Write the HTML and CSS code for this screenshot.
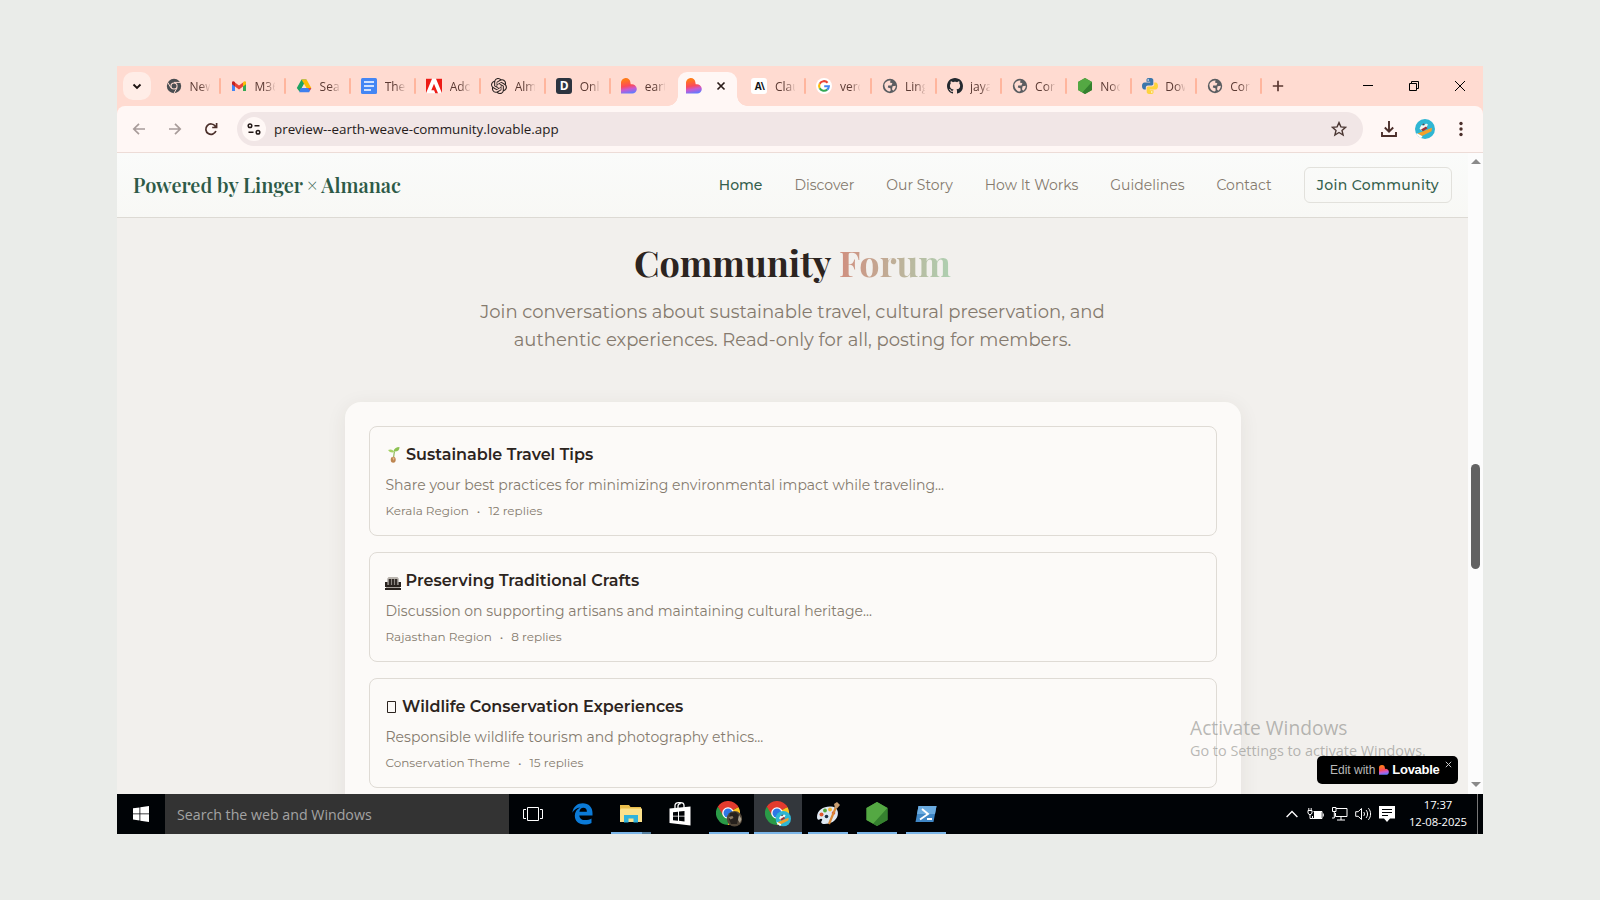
FILE: index.html
```html
<!DOCTYPE html>
<html lang="en">
<head>
<meta charset="utf-8">
<title>Community Forum</title>
<link rel="stylesheet" href="styles.css">
</head>
<body>
<svg class="defs" width="0" height="0">
  <defs>
    <linearGradient id="lov" x1="0.35" y1="0" x2="0.55" y2="1">
      <stop offset="0.1" stop-color="#ff7a1a"/><stop offset="0.5" stop-color="#fb4a5a"/><stop offset="0.72" stop-color="#c85ad0"/><stop offset="1" stop-color="#5f7bff"/>
    </linearGradient>
    <symbol id="heart" viewBox="0 0 16 16"><path d="M0 15.500V4.800A4.700 4.700 0 0 1 9.400 4.600l.3 1.700A4.900 4.900 0 0 1 15.800 11 4.600 4.600 0 0 1 11.200 15.500z" fill="url(#lov)"/></symbol>
    <symbol id="globe" viewBox="0 0 16 16"><circle cx="8" cy="8" r="7.200" fill="#5a5d61"/><path d="M2.400 6.200C3.600 3.600 6 2.300 8.600 2.500L8 4.600l2.400.6-1 2.200-3.200.2-.4 2 2.600.6.3 2.200-1 1.200C4.500 13 2.200 10 2.400 6.200zM10.600 8.200l3.200-.4c0 2-1 3.800-2.600 4.900l-1.200-1.500z" fill="#ffdbd1"/></symbol>
    <symbol id="chrome" viewBox="0 0 24 24">
      <path d="M12 12L1.600 6A12 12 0 0 1 22.400 6z" fill="#e33b2e"/>
      <path d="M12 12L22.400 6A12 12 0 0 1 12 24z" fill="#fcc31e"/>
      <path d="M12 12L12 24A12 12 0 0 1 1.600 6z" fill="#2a9a47"/>
      <path d="M12 6.500H22.700L22.400 6L21 4H12z" fill="#e33b2e"/><path d="M7.200 14.700L1.900 5.500L12 6.500z" fill="#e33b2e"/><path d="M16.800 14.700L11.500 24L7.200 14.700z" fill="#2a9a47"/>
      <circle cx="12" cy="12" r="5.800" fill="#fff"/><circle cx="12" cy="12" r="4.500" fill="#2f77e5"/>
    </symbol>
    <symbol id="avatar" viewBox="0 0 20 20"><circle cx="10" cy="10" r="10" fill="#2fb6d3"/><path d="M2.500 14.500L17 8.800l-.5 3.500L7 17z" fill="#f3a12b"/><path d="M4.500 9.500L6.500 6l2 .8L11 4.500l2 1-1.500 3-5 3z" fill="#f7f4ee"/><path d="M7 5.500l2-1 .5 1.800z" fill="#6d3030"/><path d="M6 10.500l5-3 1.500 1.700-4.500 3z" fill="#9c2f35"/><path d="M1.500 14l6 3.200-1.500 2-4-3z" fill="#fff"/></symbol>
    <symbol id="node" viewBox="0 0 16 16"><path d="M8 0l7 4v8l-7 4-7-4V4z" fill="#3f8f37"/><path d="M8 0l7 4-9.500 10.500L1 12V4z" fill="#54a843"/><path d="M15 4v8l-7 4-2.500-1.500z" fill="#35812f"/></symbol>
  </defs>
</svg>

<div class="window">
  <div class="tabstrip">
    <div class="tab-search"><svg width="10" height="7" viewBox="0 0 10 7"><path d="M1.500 1.500L5 5l3.500-3.500" fill="none" stroke="#1d1412" stroke-width="1.900"/></svg></div>
    <div class="tabs">
      <div class="tab"><svg viewBox="0 0 16 16"><circle cx="8" cy="8" r="7.200" fill="#4a4d51"/><circle cx="8" cy="8" r="3.600" fill="#ffdbd1"/><circle cx="8" cy="8" r="2.500" fill="#4a4d51"/><path d="M8 4.400h6.500M4.900 9.800L1.700 4.300M11.100 9.800L8 15.200" stroke="#ffdbd1" stroke-width="1"/></svg><span class="tt">New</span></div>
      <div class="tab"><svg viewBox="0 0 16 16"><path d="M1 3.500V13h3V7z" fill="#4285f4"/><path d="M15 3.500V13h-3V7z" fill="#34a853"/><path d="M4 4.500v4L8 11.500l4-3v-4L8 7.500z" fill="#ea4335"/><path d="M12 8.500V4.200c1.500-1.600 3-1 3 .6v1.400z" fill="#fbbc04"/><path d="M4 8.500V4.200C2.500 2.600 1 3.200 1 4.800v1.400z" fill="#c5221f"/></svg><span class="tt">M36</span></div>
      <div class="tab"><svg viewBox="0 0 16 16"><path d="M5.500 1.500h5L8 5.800 3.600 13.700.8 10z" fill="#1ea362"/><path d="M5.500 1.500h5L15.300 10h-4.800z" fill="#fbbc04"/><path d="M4.900 10h10.400l-2.200 4.200H3.200z" fill="#3f7fee"/><path d="M12 10h3.300l-1.400 2.600z" fill="#ea4335"/></svg><span class="tt">Sea</span></div>
      <div class="tab"><svg viewBox="0 0 16 16"><rect width="16" height="16" rx="1.500" fill="#4486f4"/><path d="M3 4h10M3 8h10M3 12h7" stroke="#fff" stroke-width="1.600"/></svg><span class="tt">The</span></div>
      <div class="tab"><svg viewBox="0 0 16 16"><rect y=".8" width="16" height="14.400" fill="#fff"/><path d="M0 .8h6L0 15.200zM10 .8h6v14.400zM8 5.800l4 9.400H9.300l-1.200-3H5.300z" fill="#ed1c16"/></svg><span class="tt">Ado</span></div>
      <div class="tab"><svg viewBox="0 0 24 24" fill="#2b2322"><path d="M22.280 9.820a5.980 5.980 0 0 0-.52-4.910 6.050 6.050 0 0 0-6.510-2.900A6.070 6.070 0 0 0 4.980 4.180a5.980 5.980 0 0 0-4 2.900 6.050 6.050 0 0 0 .74 7.100 5.980 5.980 0 0 0 .51 4.910 6.050 6.050 0 0 0 6.520 2.900A5.980 5.980 0 0 0 13.260 24a6.060 6.060 0 0 0 5.770-4.210 5.990 5.990 0 0 0 4-2.900 6.060 6.060 0 0 0-.75-7.070zM13.260 22.430a4.480 4.480 0 0 1-2.880-1.040l.14-.08 4.780-2.760a.79.79 0 0 0 .39-.68v-6.740l2.020 1.170v5.630a4.500 4.500 0 0 1-4.450 4.500zM3.600 18.300a4.470 4.470 0 0 1-.54-3.010l.14.080 4.790 2.760a.77.77 0 0 0 .78 0l5.840-3.370v2.330l-4.870 2.820A4.500 4.500 0 0 1 3.600 18.300zM2.340 7.900a4.490 4.490 0 0 1 2.370-1.980V11.600a.77.77 0 0 0 .39.68l5.810 3.350-2.020 1.170-4.830-2.790A4.500 4.500 0 0 1 2.340 7.900zm16.600 3.860l-5.840-3.390 2.020-1.160 4.830 2.790a4.490 4.490 0 0 1-.68 8.100v-5.680a.79.79 0 0 0-.33-.66zm2.010-3.030l-.14-.08-4.780-2.780a.78.78 0 0 0-.78 0L9.410 9.230V6.900l4.860-2.790a4.500 4.500 0 0 1 6.680 4.660zM8.310 12.860l-2.020-1.160V6.070a4.500 4.500 0 0 1 7.380-3.450l-.14.08-4.780 2.760a.79.79 0 0 0-.39.680zm1.100-2.360l2.600-1.500 2.600 1.500v3l-2.600 1.500-2.600-1.500z"/></svg><span class="tt">Alm</span></div>
      <div class="tab"><span class="fav dark">D</span><span class="tt">Onl</span></div>
      <div class="tab nosep"><svg viewBox="0 0 16 16"><use href="#heart"/></svg><span class="tt">eart</span></div>
      <div class="tab active nosep"><svg viewBox="0 0 16 16"><use href="#heart"/></svg><svg class="close" viewBox="0 0 10 10"><path d="M1.500 1.500l7 7M8.500 1.500l-7 7" stroke="#2b1d1a" stroke-width="1.700"/></svg></div>
      <div class="tab"><span class="fav light">A\</span><span class="tt">Clau</span></div>
      <div class="tab"><svg viewBox="0 0 16 16"><circle cx="8" cy="8" r="8" fill="#fff"/><g fill="none" stroke-width="2.100"><path d="M11.600 4.700A4.900 4.900 0 0 0 3.700 5.700" stroke="#ea4335"/><path d="M3.700 5.700a4.900 4.900 0 0 0 0 4.600" stroke="#fbbc05"/><path d="M3.700 10.300a4.900 4.900 0 0 0 7.500 1.300" stroke="#34a853"/><path d="M11.200 11.600A4.900 4.900 0 0 0 12.900 8.200H8.200" stroke="#4285f4"/></g></svg><span class="tt">verc</span></div>
      <div class="tab"><svg viewBox="0 0 16 16"><use href="#globe"/></svg><span class="tt">Ling</span></div>
      <div class="tab"><svg viewBox="0 0 16 16"><path fill="#24292f" d="M8 0C3.580 0 0 3.580 0 8c0 3.540 2.290 6.530 5.470 7.590.4.070.55-.17.55-.38 0-.19-.01-.82-.01-1.490-2.010.37-2.530-.49-2.690-.94-.09-.23-.48-.94-.82-1.130-.28-.15-.68-.52-.01-.53.63-.01 1.080.58 1.230.82.72 1.210 1.870.87 2.330.66.070-.52.28-.87.51-1.070-1.780-.2-3.640-.89-3.640-3.950 0-.87.31-1.590.82-2.150-.08-.2-.36-1.020.08-2.120 0 0 .67-.21 2.200.82.640-.18 1.320-.27 2-.27s1.360.09 2 .27c1.530-1.040 2.200-.82 2.200-.82.44 1.100.16 1.920.08 2.120.51.560.82 1.270.82 2.150 0 3.070-1.870 3.750-3.650 3.950.29.25.54.73.54 1.480 0 1.070-.01 1.930-.01 2.200 0 .21.15.46.55.38A8.010 8.010 0 0 0 16 8c0-4.420-3.580-8-8-8z"/></svg><span class="tt">jaya</span></div>
      <div class="tab"><svg viewBox="0 0 16 16"><use href="#globe"/></svg><span class="tt">Cor</span></div>
      <div class="tab"><svg viewBox="0 0 16 16"><use href="#node"/></svg><span class="tt">Noc</span></div>
      <div class="tab"><svg viewBox="0 0 16 16"><path d="M7.900 0C4.500 0 4.500 1 4.500 2v1.800h3.700v.7H2.500C1 4.500 0 5.800 0 8s1 3.500 2.200 3.500h1.600V9.400c0-1.200 1-2 2-2h3.800c1 0 1.700-.8 1.700-1.700V2c0-1.400-1.400-2-3.400-2z" fill="#3b76ab"/><path d="M8.100 16c3.400 0 3.400-1 3.400-2v-1.800H7.800v-.7h5.700C15 11.500 16 10.200 16 8s-1-3.500-2.200-3.500h-1.600v2.100c0 1.200-1 2-2 2H6.400c-1 0-1.700.8-1.700 1.700V14c0 1.400 1.400 2 3.400 2z" fill="#fdd33e"/><circle cx="6.200" cy="2" r=".8" fill="#fff"/><circle cx="9.800" cy="14" r=".8" fill="#fff"/></svg><span class="tt">Dow</span></div>
      <div class="tab"><svg viewBox="0 0 16 16"><use href="#globe"/></svg><span class="tt">Cor</span></div>
    </div>
    <svg class="newtab" width="12" height="12" viewBox="0 0 12 12"><path d="M6 .8v10.400M.8 6h10.400" stroke="#5b3831" stroke-width="1.700"/></svg>
    <div class="winctl">
      <svg viewBox="0 0 12 12"><path d="M1 5.500h10" stroke="#000"/></svg>
      <svg viewBox="0 0 12 12"><path d="M1.500 3.500h7v7h-7zM3.500 3.500v-2h7v7h-2" fill="none" stroke="#000"/></svg>
      <svg viewBox="0 0 12 12"><path d="M1 1l10 10M11 1L1 11" stroke="#000"/></svg>
    </div>
  </div>

  <div class="toolbar">
    <div class="navbtns">
      <svg viewBox="0 0 14 14" stroke="#a89c9a"><path d="M13 7H2M7 1.800L1.800 7 7 12.200"/></svg>
      <svg viewBox="0 0 14 14" stroke="#a89c9a"><path d="M1 7h11M7 1.800L12.200 7 7 12.200"/></svg>
      <svg viewBox="0 0 14 14" stroke="#4b2f2a"><path d="M11.900 9A5.200 5.200 0 1 1 11.300 4.200L12.500 5.500M12.600 1v4.500H8.200"/></svg>
    </div>
    <div class="omni">
      <div class="chip"><svg width="14" height="12" viewBox="0 0 14 12" fill="none" stroke="#241a18" stroke-width="1.500"><circle cx="3" cy="2.800" r="1.800"/><path d="M7.500 2.800h5M1.500 9.200h5"/><circle cx="11" cy="9.200" r="1.800"/></svg></div>
      <span class="url">preview--earth-weave-community.lovable.app</span>
      <svg class="star" width="16" height="16" viewBox="0 0 16 16"><path d="M8 1.600l1.900 4.300 4.700.4-3.600 3.100 1.100 4.600L8 11.500 3.900 14l1.100-4.600L1.400 6.300l4.700-.4z" fill="none" stroke="#4b3733" stroke-width="1.400"/></svg>
    </div>
    <div class="actions">
      <svg width="16" height="16" viewBox="0 0 16 16" fill="none" stroke="#4b2f2a" stroke-width="1.900"><path d="M8 0v10.500M3.800 6.500L8 10.700l4.200-4.200M1 11v4h14v-4"/></svg>
      <svg width="20" height="20"><use href="#avatar"/></svg>
      <svg width="4" height="16" viewBox="0 0 4 16" fill="#4b2f2a"><circle cx="2" cy="2.500" r="1.700"/><circle cx="2" cy="8" r="1.700"/><circle cx="2" cy="13.500" r="1.700"/></svg>
    </div>
  </div>

  <div class="view">
    <div class="page">
      <header class="head">
        <div class="brand">Powered by Linger × Almanac</div>
        <nav class="nav">
          <a class="on">Home</a><a>Discover</a><a>Our Story</a><a>How It Works</a><a>Guidelines</a><a>Contact</a>
          <a class="join">Join Community</a>
        </nav>
      </header>
      <section class="forum">
        <h1>Community <span>Forum</span></h1>
        <p class="lead">Join conversations about sustainable travel, cultural preservation, and<br>authentic experiences. Read-only for all, posting for members.</p>
        <div class="card">
          <article class="topic">
            <h3><svg width="16" height="16" viewBox="0 0 16 16"><path d="M7.500 11C8 8 8 6 8.500 4.500" stroke="#8fb95c" stroke-width="1.200" fill="none"/><path d="M7.500 4.500C8 1.500 10 0 13.500 0 13.500 3.500 11.500 5 7.500 4.500z" fill="#8cc152"/><path d="M8 5C6.500 6 3.500 5.500 2 3 4.500 1.800 7.500 2.500 8 5z" fill="#a5d264"/><ellipse cx="7.200" cy="12.800" rx="2.500" ry="3" fill="#bd8550"/><path d="M6.200 10.300l2.400.5-.8 3z" fill="#e7b98a"/></svg><span>Sustainable Travel Tips</span></h3>
            <p>Share your best practices for minimizing environmental impact while traveling...</p>
            <div class="meta"><span>Kerala Region</span><span>•</span><span>12 replies</span></div>
          </article>
          <article class="topic">
            <h3><svg class="low" width="16" height="14" viewBox="0 0 16 14"><path d="M3.500 1h9l1.500 2H2z" fill="#b9b4ae"/><path d="M2.500 3h11v6h-11z" fill="#8d8782"/><path d="M4 3h2v6H4zM7 3h2v6H7zM10 3h2v6h-2z" fill="#332c28"/><path d="M0 6h2.500v3h11V6H16v5H0z" fill="#28211d"/><path d="M1 11h14v1H1z" fill="#a8a29c"/><path d="M0 12h16v2H0z" fill="#28211d"/></svg><span>Preserving Traditional Crafts</span></h3>
            <p>Discussion on supporting artisans and maintaining cultural heritage...</p>
            <div class="meta"><span>Rajasthan Region</span><span>•</span><span>8 replies</span></div>
          </article>
          <article class="topic">
            <h3><svg width="12" height="16" viewBox="0 0 12 16"><path d="M1.500 2.500h8v11h-8z" fill="none" stroke="#2c2420"/></svg><span>Wildlife Conservation Experiences</span></h3>
            <p>Responsible wildlife tourism and photography ethics...</p>
            <div class="meta"><span>Conservation Theme</span><span>•</span><span>15 replies</span></div>
          </article>
        </div>
      </section>
    </div>
    <div class="scroll"><i class="up"></i><i class="thumb"></i><i class="down"></i></div>
    <div class="activate"><div class="a1">Activate Windows</div><div class="a2">Go to Settings to activate Windows.</div></div>
    <div class="badge"><span>Edit with</span><svg width="10" height="10" viewBox="0 0 16 16"><use href="#heart"/></svg><b>Lovable</b><svg class="bx" width="7" height="7" viewBox="0 0 7 7"><path d="M.8.8l5.400 5.400M6.200.8L.8 6.200" stroke="#c8c8c8"/></svg></div>
  </div>

  <div class="taskbar">
    <div class="start"><svg width="16" height="16" viewBox="0 0 16 16" fill="#fff"><path d="M0 2.300l6.500-.9v6.100H0zM7.300 1.300L16 0v7.500H7.300zM0 8.300h6.500v6.200L0 13.600zM7.300 8.300H16V16l-8.700-1.300z"/></svg></div>
    <div class="search">Search the web and Windows</div>
    <div class="apps">
      <div class="app"><svg width="20" height="14" viewBox="0 0 20 14" fill="none" stroke="#fff"><path d="M4.500.5h11v13h-11zM3 2.500H.5v9H3M17 2.500h2.500v9H17"/></svg></div>
      <div class="app"><svg width="21" height="22" viewBox="0 0 21 22"><path d="M.3 9.800C1.300 3.500 5.500.3 10.800.3c6 0 9.700 4.200 9.700 9.600v2.500H7.300c.2 3 2.600 4.700 5.900 4.700 2.500 0 4.500-.6 6.300-1.700v4.500c-2 1.100-4.300 1.600-7.100 1.600C6.300 21.500 2.800 18 2.800 12.800c0-3.700 2-6.800 5.300-8.300C4.700 4.900 2 7 .3 9.800zM7.400 8.700h7.500c0-2.500-1.300-3.900-3.500-3.900s-3.600 1.500-4 3.900z" fill="#0b7bd8"/></svg></div>
      <div class="app open"><svg width="22" height="20" viewBox="0 0 22 20"><path d="M0 1h9l1.500 2H21v15H0z" fill="#e9bd4b"/><path d="M1 4.500h21V18H0V6z" fill="#fbe18b"/><path d="M4 18.500V11h14v7.500h-4.500V14.500h-5v4z" fill="#2fb3dc"/></svg><i class="stack"></i></div>
      <div class="app"><svg width="22" height="24" viewBox="0 0 22 24"><path d="M6 6V3.500C6 1.500 7.500.7 9.500.7h2c2 0 3.500.8 3.500 2.800V6M9 6V4c0-1.600 1.200-2.300 2.700-2.300" fill="none" stroke="#fff" stroke-width="1.300"/><path d="M.5 6.500L21.500 4.500V23.500L.5 21z" fill="#fff"/><path d="M4 10.200l5-.5v4H4zM10 9.600l5.500-.6v4.700H10zM4 14.600h5v4.100l-5-.5zM10 14.600h5.500v4.800l-5.500-.6z" fill="#000306"/></svg></div>
      <div class="app open"><svg width="26" height="26" viewBox="0 0 26 26"><use href="#chrome" width="24" height="24"/><circle cx="18.500" cy="17.800" r="7.700" fill="#514638"/><path d="M14 12l6-1 3 3-2 9h-6l-2-5z" fill="#26211d"/><path d="M12.500 16l4-1 1 2-3 1.500z" fill="#8b7a62"/><path d="M23 14l2.500 4-1.500 4-2-3z" fill="#aaa18f"/></svg></div>
      <div class="app open cur"><svg width="26" height="26" viewBox="0 0 26 26"><use href="#chrome" width="24" height="24"/><use href="#avatar" x="10.500" y="10" width="15.500" height="15.500"/></svg></div>
      <div class="app open"><svg width="24" height="24" viewBox="0 0 24 24"><path d="M1 15C1 8 8 4 15 4.500c6 .5 8 5 6.500 9.500-1.500 5-7 8-13 8-3.500 0-4-2-2.500-3.500C7 17 5 16 3.500 17.500 2 18.500 1 17 1 15z" fill="#dfe9f2"/><circle cx="5.500" cy="12.500" r="2" fill="#e0562f"/><circle cx="9" cy="8.500" r="1.900" fill="#58a83e"/><circle cx="14" cy="7.500" r="1.900" fill="#f1b434"/><circle cx="17.500" cy="11" r="1.800" fill="#d4424b"/><circle cx="10.500" cy="14.500" r="1.800" fill="#1c2e45"/><path d="M13 22L20 5" stroke="#d98836" stroke-width="2.200"/><path d="M19 6l-1-4 3-2 3 3-3 3.500z" fill="#c79d70"/></svg></div>
      <div class="app open"><svg width="24" height="24" viewBox="0 0 16 16"><use href="#node"/></svg></div>
      <div class="app open"><svg width="22" height="20" viewBox="0 0 22 20"><path d="M3.500 2H21.500L18.500 18H.5z" fill="#3f86c4"/><path d="M3.500 2H21.500L20 10 2 10z" fill="#6aabdf"/><path d="M7 5l6 5-8 5.500M12 15h5" fill="none" stroke="#fff" stroke-width="1.900"/></svg></div>
    </div>
    <div class="tray">
      <svg width="12" height="8" viewBox="0 0 12 8"><path d="M.6 7L6 1.500 11.400 7" fill="none" stroke="#fff" stroke-width="1.300"/></svg>
      <svg width="17" height="14" viewBox="0 0 17 14" fill="none" stroke="#fff"><path d="M1 3.500h4V6L4 7.500H2L1 6zM1.800 3V1M4.200 3V1M3 7.500v4h2.500"/><path d="M7 5h7.500v6H7z" fill="#fff" stroke="none"/><path d="M6.500 4.500h8.500v7H5.500V9M16.300 6.500v3"/></svg>
      <svg width="17" height="14" viewBox="0 0 17 14" fill="none" stroke="#fff"><path d="M5 1.500h11v8H4.500V6M10 9.500V13M6 13h8M1.500.5h3.500v4H1.500zM3.300 4.500V11H1"/></svg>
      <svg width="17" height="14" viewBox="0 0 17 14" fill="none" stroke="#fff"><path d="M.7 4.700h2.500L6.500 1.500v11L3.200 9.300H.7zM8.700 5c1 1.200 1 2.800 0 4M11 3c2 2.300 2 5.700 0 8M13.400 1.200c2.900 3.400 2.900 8.200 0 11.600"/></svg>
      <svg width="16" height="16" viewBox="0 0 16 16"><path d="M0 0h16v12.500h-5L8 16l-3-3.500H0z" fill="#fff"/><path d="M3 3.500h10M3 6.500h10M3 9.500h6" stroke="#000306"/></svg>
    </div>
    <div class="clock"><span>17:37</span><span>12-08-2025</span></div>
    <div class="peek"></div>
  </div>
</div>
</body>
</html>
```
FILE: styles.css
```css
* { box-sizing: border-box; }
body {
  margin: 0; height: 900px; overflow: hidden;
  background: #eaece9;
  font-family: "Open Sans", "Noto Sans", sans-serif;
}
.defs { position: absolute; }
svg { display: block; flex: none; }
.window { width: 1366px; height: 768px; margin: 66px 0 0 117px; display: flex; flex-direction: column; overflow: hidden; background: #ffdbd1; }

/* tab strip */
.tabstrip { height: 40px; flex: none; display: flex; align-items: center; padding-left: 6px; background: #ffdbd1; }
.tab-search { width: 28px; height: 28px; border-radius: 10px; background: #ffede7; display: flex; align-items: center; justify-content: center; }
.tabs { display: flex; height: 40px; margin-left: 5px; }
.tab { width: 65.050px; display: flex; align-items: center; padding-left: 10px; position: relative; }
.tab svg, .fav { width: 16px; height: 16px; flex: none; }
.tab::after { content: ""; position: absolute; right: 0; top: 12px; width: 2px; height: 16px; background: #ffb59d; border-radius: 1px; }
.tab.nosep::after { display: none; }
.tt { width: 20px; margin: 1px 0 0 7.500px; overflow: hidden; white-space: nowrap; font-size: 12px; color: #5b3a33; line-height: 18px;
  -webkit-mask-image: linear-gradient(90deg, #000 50%, transparent 105%); mask-image: linear-gradient(90deg, #000 50%, transparent 105%); }
.fav { border-radius: 3px; font: 700 12px/16px "Open Sans", sans-serif; text-align: center; }
.fav.dark { background: #2c3440; color: #fff; }
.fav.light { background: #fff; color: #111; font-size: 10px; letter-spacing: -0.8px; }
.tab.active::before { content: ""; position: absolute; z-index: 0; left: 2px; top: 6px; width: 59px; height: 34px; border-radius: 9px 9px 0 0; background: #fff7f5; }
.tab.active::after { display: block; left: -8px; right: auto; top: 30px; width: 79px; height: 10px; border-radius: 0;
  background: radial-gradient(circle at 0 0, transparent 9.500px, #fff7f5 10px) 0 0 / 10px 10px no-repeat, radial-gradient(circle at 100% 0, transparent 9.500px, #fff7f5 10px) 100% 0 / 10px 10px no-repeat; }
.tab.active svg { position: relative; z-index: 1; }
.tab.active .close { width: 10px; height: 10px; margin-left: 14px; }
.newtab { margin-left: 10px; }
.winctl { margin-left: auto; margin-right: 17px; display: flex; gap: 34px; }
.winctl svg { width: 12px; height: 12px; }

/* toolbar */
.toolbar { height: 47px; flex: none; display: flex; align-items: center; background: #fff7f5; border-bottom: 1px solid #eddcd7; border-radius: 8px 8px 0 0; }
.navbtns { display: flex; gap: 22px; padding-left: 15px; width: 120px; }
.navbtns svg { width: 14px; height: 14px; fill: none; stroke-width: 1.700px; }
.omni { width: 1126px; height: 34px; border-radius: 17px; background: #f1e6e6; display: flex; align-items: center; padding-left: 5px; }
.chip { width: 24px; height: 24px; border-radius: 50%; background: #fff8f6; display: flex; align-items: center; justify-content: center; }
.url { margin-left: 8px; font-size: 13.400px; letter-spacing: -0.020px; color: #251b1a; white-space: nowrap; }
.star { margin-left: auto; margin-right: 16px; }
.actions { display: flex; align-items: center; gap: 18px; margin-left: 18px; }
.actions svg:last-child { margin-left: 6px; }

/* page */
.view { height: 641px; flex: none; display: flex; position: relative; overflow: hidden; font-family: Montserrat, Inter, sans-serif; }
.page { width: 1351px; background: #f2f0ed; }
.head { height: 65px; display: flex; align-items: center; justify-content: space-between; padding: 0 16px; background: linear-gradient(#fafbfa, #f8f8f5); border-bottom: 1px solid #dddad4; }
.brand { font: 600 20px/28px "Playfair Display", "Liberation Serif", serif; color: #2d5a47; white-space: nowrap; }
.nav { display: flex; align-items: center; gap: 32px; font-size: 14px; line-height: 20px; color: #857a6e; white-space: nowrap; }
.nav .on { color: #35604d; font-weight: 500; }
.nav .join { height: 36px; padding: 7px 12px; border: 1px solid #e2e1dc; border-radius: 6px; color: #35604d; font-weight: 500; letter-spacing: 0.350px; }
.forum { padding-top: 24px; display: flex; flex-direction: column; align-items: center; }
h1 { margin: 0; font: 700 36px/40px "Playfair Display", "Liberation Serif", serif; color: #2c2420; white-space: nowrap; }
h1 span { background: linear-gradient(90deg, #d08f7f, #aed0b1); -webkit-background-clip: text; background-clip: text; color: transparent; }
.lead { margin: 16px 0 0; font-size: 18px; line-height: 28px; color: #857a6e; text-align: center; white-space: nowrap; }
.card { width: 896px; height: 430px; margin-top: 48px; flex: none; padding: 24px; border-radius: 16px; background: #fcfaf8; box-shadow: 0 4px 20px rgba(60, 50, 40, 0.08); display: flex; flex-direction: column; gap: 16px; }
.topic { height: 110px; flex: none; padding: 16px; border: 1px solid #dfdbd5; border-radius: 8px; }
.topic h3 { margin: 0; display: flex; align-items: center; gap: 4.500px; font-size: 16px; line-height: 24px; font-weight: 600; color: #2c2420; }
.topic h3 .low { margin: 3px 0 0 -0.500px; }
.topic p { margin: 8px 0 0; font-size: 14px; line-height: 20px; color: #857a6e; }
.meta { margin-top: 8px; display: flex; gap: 8px; font-size: 12px; line-height: 16px; color: #857a6e; }

.scroll { width: 15px; background: #fcfcfc; display: flex; flex-direction: column; align-items: center; }
.scroll .up { margin-top: 6px; border: 5px solid transparent; border-top: 0; border-bottom: 5px solid #8a8a8a; }
.scroll .thumb { margin-top: 300px; width: 9px; height: 105px; border-radius: 5px; background: #626262; }
.scroll .down { margin-top: auto; margin-bottom: 7px; border: 5px solid transparent; border-bottom: 0; border-top: 5px solid #8a8a8a; }

/* overlays */
.activate { position: absolute; left: 1073px; top: 562px; font-family: "Open Sans", sans-serif; color: rgba(120, 120, 116, 0.52); white-space: nowrap; }
.a1 { font-size: 19.200px; line-height: 26px; }
.a2 { font-size: 14.400px; line-height: 20px; }
.badge { position: absolute; left: 1200px; top: 603px; width: 141px; height: 28px; border-radius: 5px; background: #000; color: #b9b9b9; display: flex; align-items: center; padding-left: 13px; font: 12px/28px "Liberation Sans", sans-serif; white-space: nowrap; }
.badge > svg { margin-left: 4px; }
.badge b { margin-left: 3px; color: #fff; font-size: 13px; letter-spacing: -0.300px; }
.badge .bx { position: absolute; right: 6px; top: 5px; margin: 0; }

/* taskbar */
.taskbar { height: 40px; flex: none; display: flex; background: #000306; color: #fff; }
.start { width: 48px; display: flex; align-items: center; justify-content: center; }
.search { width: 344px; background: #333; color: #a3a3a3; font-size: 14.200px; line-height: 42px; padding-left: 12px; }
.apps { display: flex; gap: 1.100px; }
.app { width: 48px; position: relative; display: flex; align-items: center; justify-content: center; }
.app.open::after { content: ""; position: absolute; left: 4px; bottom: 0; width: 40px; height: 2px; background: #7cb6e8; }
.app.cur { background: #33373c; }
.app.cur::after { left: 0; width: 48px; }
.stack { position: absolute; z-index: 1; right: 4px; bottom: 0; width: 9px; height: 2px; background: #557f9f; }
.tray { margin-left: auto; display: flex; align-items: center; gap: 7px; }
.tray svg:first-child { margin-right: 2px; }
.clock { width: 75px; margin-left: 7px; display: flex; flex-direction: column; align-items: center; padding: 2px 3px 0 0; font-size: 11.300px; line-height: 17px; letter-spacing: -0.100px; }
.peek { width: 6px; border-left: 1px solid #777; }
```
